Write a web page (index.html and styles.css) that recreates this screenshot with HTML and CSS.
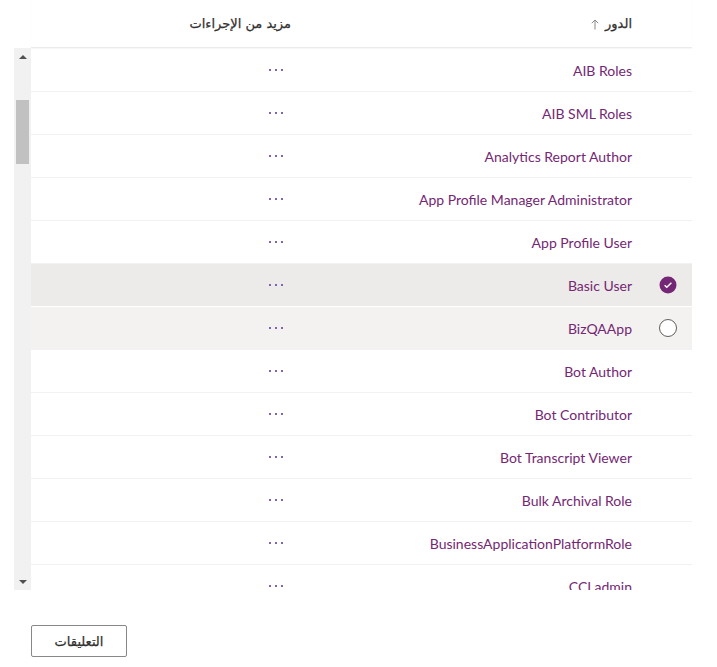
FILE: index.html
```html
<!DOCTYPE html>
<html lang="ar" dir="ltr">
<head>
<meta charset="utf-8">
<title>Roles</title>
<link rel="stylesheet" href="styles.css">
</head>
<body>
<div class="grid">
  <div class="header">
    <div class="hcell hcheck"></div>
    <div class="hcell hname"><span class="htext">الدور</span><svg class="sort" width="8" height="11" viewBox="0 0 8 11"><path d="M4 10.5V1M0.8 4.2L4 1L7.2 4.2" fill="none" stroke="#8a8886" stroke-width="1"/></svg></div>
    <div class="hcell hact"><span class="htext">مزيد من الإجراءات</span></div>
  </div>
  <div class="body">
    <div class="rows">
      <div class="row"><div class="ccheck"></div><div class="cname">AIB Roles</div><div class="cact"><span class="more"><i></i><i></i><i></i></span></div></div>
      <div class="row"><div class="ccheck"></div><div class="cname">AIB SML Roles</div><div class="cact"><span class="more"><i></i><i></i><i></i></span></div></div>
      <div class="row"><div class="ccheck"></div><div class="cname">Analytics Report Author</div><div class="cact"><span class="more"><i></i><i></i><i></i></span></div></div>
      <div class="row"><div class="ccheck"></div><div class="cname">App Profile Manager Administrator</div><div class="cact"><span class="more"><i></i><i></i><i></i></span></div></div>
      <div class="row"><div class="ccheck"></div><div class="cname">App Profile User</div><div class="cact"><span class="more"><i></i><i></i><i></i></span></div></div>
      <div class="row selected"><div class="ccheck"><svg width="18" height="18" viewBox="0 0 18 18"><circle cx="9" cy="9" r="8.5" fill="#742774"/><path d="M5.6 9.2L7.8 11.3L12.4 6.7" fill="none" stroke="#fff" stroke-width="1.4"/></svg></div><div class="cname">Basic User</div><div class="cact"><span class="more"><i></i><i></i><i></i></span></div></div>
      <div class="row hover"><div class="ccheck"><svg width="18" height="18" viewBox="0 0 18 18"><circle cx="9" cy="9" r="8.5" fill="#fff" stroke="#605e5c" stroke-width="1"/></svg></div><div class="cname">BizQAApp</div><div class="cact"><span class="more"><i></i><i></i><i></i></span></div></div>
      <div class="row"><div class="ccheck"></div><div class="cname">Bot Author</div><div class="cact"><span class="more"><i></i><i></i><i></i></span></div></div>
      <div class="row"><div class="ccheck"></div><div class="cname">Bot Contributor</div><div class="cact"><span class="more"><i></i><i></i><i></i></span></div></div>
      <div class="row"><div class="ccheck"></div><div class="cname">Bot Transcript Viewer</div><div class="cact"><span class="more"><i></i><i></i><i></i></span></div></div>
      <div class="row"><div class="ccheck"></div><div class="cname">Bulk Archival Role</div><div class="cact"><span class="more"><i></i><i></i><i></i></span></div></div>
      <div class="row"><div class="ccheck"></div><div class="cname">BusinessApplicationPlatformRole</div><div class="cact"><span class="more"><i></i><i></i><i></i></span></div></div>
      <div class="row"><div class="ccheck"></div><div class="cname">CCLadmin</div><div class="cact"><span class="more"><i></i><i></i><i></i></span></div></div>
    </div>
    <div class="scrollbar">
      <div class="arrow up"></div>
      <div class="track"><div class="thumb"></div></div>
      <div class="arrow down"></div>
    </div>
  </div>
</div>
<div class="footer">
  <button class="btn">التعليقات</button>
</div>
</body>
</html>
```
FILE: styles.css
```css
html, body {
  margin: 0;
  padding: 0;
  background: #fff;
}
body {
  font-family: "Lato", "DejaVu Sans", sans-serif;
  font-size: 14px;
  color: #323130;
}
.grid {
  margin-left: 14px;
  width: 678px;
}
.header {
  display: flex;
  flex-direction: row-reverse;
  margin-left: 17px;
  height: 47px;
  border-bottom: 1px solid #edebe9;
  box-shadow: 0 1px 1px rgba(0,0,0,0.03);
}
.hcell {
  display: flex;
  align-items: center;
  justify-content: flex-end;
  box-sizing: border-box;
  padding-right: 12px;
  color: #323130;
}
.htext {
  font-family: "DejaVu Sans", sans-serif;
  font-size: 13px;
  font-weight: 400;
  direction: rtl;
  -webkit-text-stroke: 0.25px #323130;
}
.hcheck { width: 48px; padding: 0; }
.hname { width: 341px; flex-direction: row-reverse; justify-content: flex-start; gap: 6px; }
.sort { display: block; margin-top: 1px; }
.hact { flex: 1; }
.body {
  display: flex;
  flex-direction: row-reverse;
  height: 542px;
}
.rows {
  flex: 1;
  overflow: hidden;
  padding-top: 1px;
}
.row {
  display: flex;
  flex-direction: row-reverse;
  height: 42px;
  border-bottom: 1px solid #f3f2f1;
  color: #742774;
}
.row.selected { background: #edebe9; border-bottom-color: #fff; }
.row.hover { background: #f3f2f1; }
.ccheck {
  width: 48px;
  display: flex;
  align-items: center;
  justify-content: center;
}
.ccheck svg { display: block; }
.cname {
  width: 341px;
  box-sizing: border-box;
  padding-right: 12px;
  padding-top: 0;
  display: flex;
  align-items: center;
  justify-content: flex-end;
  white-space: nowrap;
}
.cact {
  flex: 1;
  display: flex;
  align-items: center;
  justify-content: flex-end;
  padding-right: 11px;
}
.more {
  width: 32px;
  height: 32px;
  display: flex;
  align-items: center;
  justify-content: center;
  gap: 4px;
}
.more i {
  display: block;
  width: 2px;
  height: 2px;
  background: #8063b5;
}
.scrollbar {
  width: 17px;
  background: #f1f1f1;
  display: flex;
  flex-direction: column;
}
.arrow {
  height: 17px;
  display: flex;
  align-items: center;
  justify-content: center;
}
.arrow::before {
  content: "";
  width: 0;
  height: 0;
  border-left: 4px solid transparent;
  border-right: 4px solid transparent;
}
.arrow.up::before { border-bottom: 4px solid #505050; }
.arrow.down::before { border-top: 4px solid #505050; }
.track {
  flex: 1;
  padding: 35px 2px 0;
}
.thumb {
  height: 64px;
  background: #c1c1c1;
}
.footer {
  padding: 35px 0 0 31px;
}
.btn {
  width: 96px;
  height: 32px;
  background: #fff;
  border: 1px solid #8a8886;
  border-radius: 2px;
  font-family: "DejaVu Sans", sans-serif;
  font-size: 13px;
  font-weight: 400;
  -webkit-text-stroke: 0.25px #323130;
  color: #323130;
  direction: rtl;
  padding: 0;
}
```
